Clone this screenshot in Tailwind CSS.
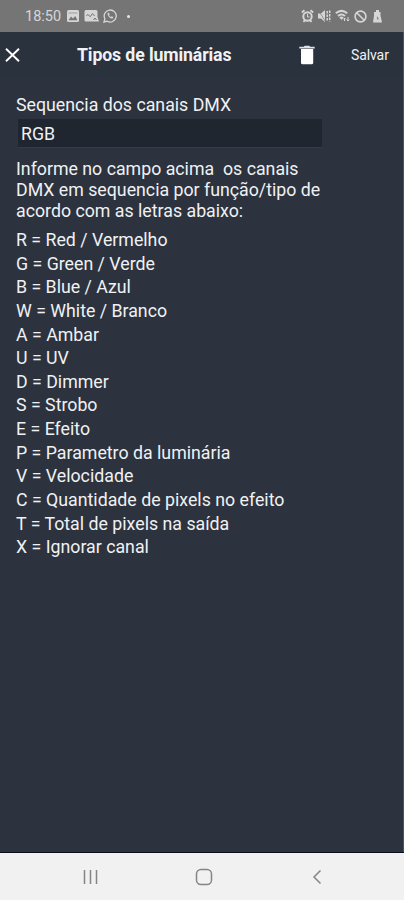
<!DOCTYPE html>
<html lang="pt-BR">
<head>
<meta charset="utf-8">
<title>Tipos de luminárias</title>
<script src="https://cdn.jsdelivr.net/npm/@tailwindcss/browser@4"></script>
</head>
<body class="flex h-[900px] w-[404px] flex-col overflow-hidden bg-[#2c333f] font-['Roboto',sans-serif] text-[#f0f1f3]">
<div class="flex h-8 shrink-0 items-center bg-[#757575] pl-[25px] text-[#d6d6d6]">
  <span class="w-[42px] whitespace-nowrap pt-px text-[14.5px] leading-8">18:50</span>
  <svg class="h-3 w-3" viewBox="0 0 12 12"><rect width="12" height="12" rx="1.500" fill="currentColor"/><path d="M1.500 10.300 4 6.500l2 2 2.200-2.500 2.300 4.300Z" fill="#757575"/><path d="M1.500 3h9" stroke="#757575" stroke-width=".6"/></svg>
  <svg class="ml-[5px] h-3 w-[15px]" viewBox="0 0 15 12"><path d="M2 0h10q1.500 0 1.500 1.500V7l1.500 4.500H2Q.5 11.500.5 10V1.500Q.5 0 2 0Z" fill="currentColor"/><path d="M2.500 6q1-3 2.500-.5t2.500-.5 3 1M9.500 10l1.500-2 1.500 2" fill="none" stroke="#757575"/></svg>
  <svg class="ml-[4px] h-[14px] w-[14px]" viewBox="0 0 14 14" fill="none" stroke="currentColor"><path d="m1 13 .9-3.200A6 6 0 1 1 4.200 12.200Z" stroke-width="1.300"/><path d="M4.500 4.200c0 3 2.500 5.300 5.200 5.300l.6-1.500-1.600-.8-.8.8Q6.500 7.300 6 6l.7-.7L6 3.800Z" fill="currentColor" stroke="none"/></svg>
  <span class="ml-[10px] h-[3px] w-[3px] rounded-full bg-[#e6e6e6]"></span>
  <svg class="ml-[171px] h-[14px] w-[13px]" viewBox="0 0 13 14" fill="none" stroke="currentColor"><circle cx="6.500" cy="7.500" r="4.200" stroke-width="2"/><path d="M.8 3.500 3.500 1.200M12.200 3.500 9.500 1.200M2.500 13 4 11M10.500 13 9 11" stroke-width="1.800"/><path d="M6.500 5v3h2"/></svg>
  <svg class="ml-[4px] h-[14px] w-[13px]" viewBox="0 0 13 14"><path d="M0 4.500h3l4-3.500v12l-4-3.500H0Z" fill="currentColor"/><path d="M.5 1.500 7.500 12.500" stroke="#757575" stroke-width=".7"/><path d="M9.200 2v10M11.700 1.500v11" stroke="currentColor" stroke-width="1.500" stroke-dasharray="2.500 1"/></svg>
  <svg class="ml-[4px] h-[14px] w-[16px]" viewBox="0 0 16 14" fill="none" stroke="currentColor"><path d="M.8 4.200q5.700-4.700 11.400 0M3 7q3.500-3 7 0" stroke-width="2"/><path d="M4.300 8.200q2.200-1.500 4.400 0L6.500 11Z" fill="currentColor" stroke="none"/><path d="M9.500 12V9l-1.200 1.300M9.500 9l1.200 1.300M13 8v4l-1.300-1.300M13 12l1.300-1.300"/></svg>
  <svg class="ml-[3px] h-[13px] w-[13px]" viewBox="0 0 13 13" fill="none" stroke="currentColor" stroke-width="1.600"><circle cx="6.500" cy="6.500" r="5.400"/><path d="m2.700 2.700 7.600 7.600"/></svg>
  <svg class="ml-[6px] h-[13px] w-[9px]" viewBox="0 0 9 13"><path d="M3 0h3v2h1.500v3.500L9 12.500H0L1 5.500V2h2Z" fill="currentColor"/><path d="m3.500 8.200 1.500-2v2h1L4.500 10.500V8.200Z" fill="#757575"/></svg>
</div>
<div class="flex min-h-0 grow flex-col border-r border-[#4c5566]">
<header class="flex h-[46px] shrink-0 items-center bg-[#2a323e]">
  <svg class="ml-[5px] h-[14px] w-[15px]" viewBox="0 0 15 14" fill="none" stroke="#fff" stroke-width="1.900"><path d="m1 .7 13 12.600M14 .7 1 13.300"/></svg>
  <h1 class="ml-[57px] w-[222px] whitespace-nowrap text-[17.700px] font-bold tracking-[-0.120px]">Tipos de luminárias</h1>
  <svg class="h-[20px] w-[16px]" viewBox="0 0 16 20" fill="#fff"><path d="M.3 1.700h4.500L5.600.7h4.800l.8 1h4.500v1.700H.3Z" fill="#dfe1e4"/><path d="M2 4h12.200v13.700q0 1.600-1.600 1.600h-9Q2 19.300 2 17.700Z"/></svg>
  <span class="ml-[36px] whitespace-nowrap text-[14px] tracking-[-0.100px]">Salvar</span>
</header>
<main class="flex flex-col pl-4 pt-4 text-[17.750px]">
  <label class="h-[25px] whitespace-nowrap leading-[22px]" for="dmx">Sequencia dos canais DMX</label>
  <div id="dmx" class="ml-[2px] h-[29px] w-[304px] border-b border-[#343b47] bg-[#1f2630] pl-[3px] leading-[30px]">RGB</div>
  <p class="mt-[11px] whitespace-pre leading-[21px]">Informe no campo acima  os canais
DMX em sequencia por função/tipo de
acordo com as letras abaixo:</p>
  <ul class="mt-[7px] whitespace-nowrap leading-[23.620px]">
    <li>R = Red / Vermelho</li>
    <li>G = Green / Verde</li>
    <li>B = Blue / Azul</li>
    <li>W = White / Branco</li>
    <li>A = Ambar</li>
    <li>U = UV</li>
    <li>D = Dimmer</li>
    <li>S = Strobo</li>
    <li>E = Efeito</li>
    <li>P = Parametro da luminária</li>
    <li>V = Velocidade</li>
    <li>C = Quantidade de pixels no efeito</li>
    <li>T = Total de pixels na saída</li>
    <li>X = Ignorar canal</li>
  </ul>
</main>
</div>
<nav class="flex h-[48px] shrink-0 items-center border-t border-[#0b1017] bg-[#f1f1f1] pl-[83px] text-[#858585]">
  <svg class="h-4 w-[15px]" viewBox="0 0 15 16" stroke="currentColor" stroke-width="1.500"><path d="M1.500 1v14M7.500 1v14M13.500 1v14"/></svg>
  <svg class="ml-[97px] h-[18px] w-[18px]" viewBox="0 0 18 18" fill="none" stroke="currentColor" stroke-width="1.500"><rect x="1.500" y="1.500" width="15" height="15" rx="4.500"/></svg>
  <svg class="ml-[99px] h-4 w-[10px]" viewBox="0 0 10 16" fill="none" stroke="currentColor" stroke-width="1.500"><path d="M8.500 1.500 2 8l6.500 6.500"/></svg>
</nav>
</body>
</html>
